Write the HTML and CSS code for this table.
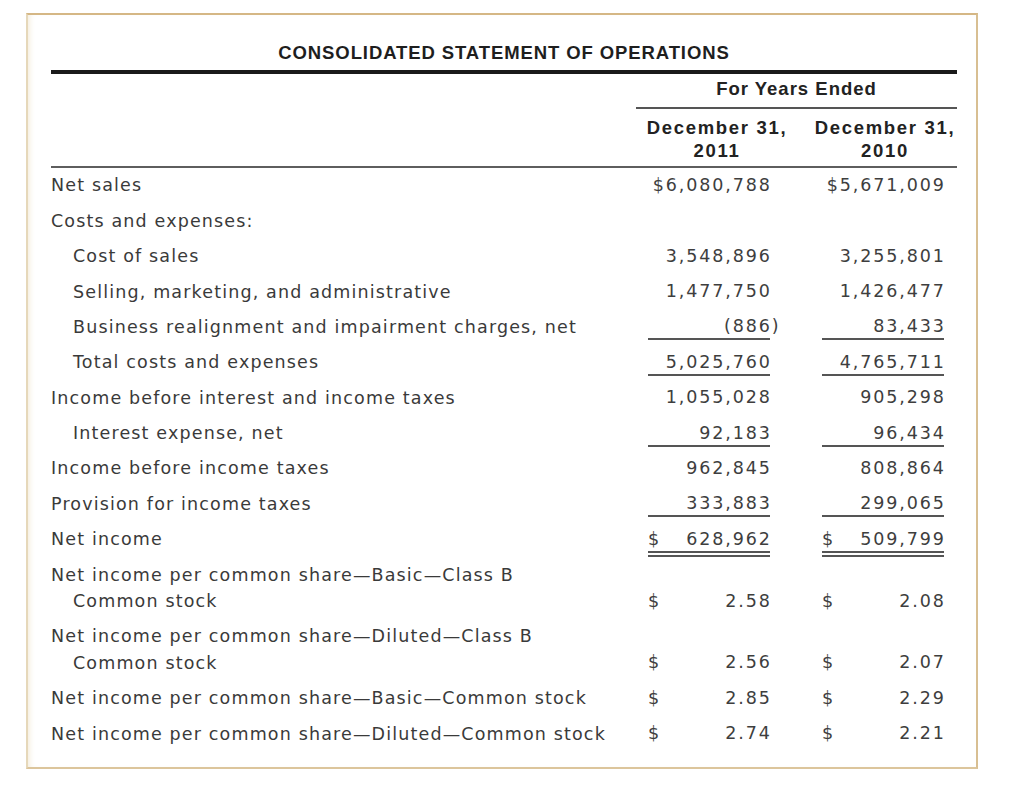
FILE: index.html
```html
<!DOCTYPE html>
<html lang="en">
<head>
<meta charset="utf-8">
<title>Consolidated Statement of Operations</title>
<link rel="stylesheet" href="styles.css">
</head>
<body>
<div class="sheet">
  <div class="title">CONSOLIDATED STATEMENT OF OPERATIONS</div>
  <div class="period">For Years Ended</div>
  <div class="dates">
    <div class="date c1">December 31,<br>2011</div>
    <div class="date c2">December 31,<br>2010</div>
  </div>
  <div class="rows">
    <div class="row"><div class="label">Net sales</div><div class="num"><span class="v">$6,080,788</span></div><div class="num"><span class="v">$5,671,009</span></div></div>
    <div class="row"><div class="label">Costs and expenses:</div><div class="num"></div><div class="num"></div></div>
    <div class="row"><div class="label indent">Cost of sales</div><div class="num"><span class="v">3,548,896</span></div><div class="num"><span class="v">3,255,801</span></div></div>
    <div class="row"><div class="label indent">Selling, marketing, and administrative</div><div class="num"><span class="v">1,477,750</span></div><div class="num"><span class="v">1,426,477</span></div></div>
    <div class="row"><div class="label indent">Business realignment and impairment charges, net</div><div class="num u"><span class="v neg">(886)</span></div><div class="num u"><span class="v">83,433</span></div></div>
    <div class="row"><div class="label indent">Total costs and expenses</div><div class="num u"><span class="v">5,025,760</span></div><div class="num u"><span class="v">4,765,711</span></div></div>
    <div class="row"><div class="label">Income before interest and income taxes</div><div class="num"><span class="v">1,055,028</span></div><div class="num"><span class="v">905,298</span></div></div>
    <div class="row"><div class="label indent">Interest expense, net</div><div class="num u"><span class="v">92,183</span></div><div class="num u"><span class="v">96,434</span></div></div>
    <div class="row"><div class="label">Income before income taxes</div><div class="num"><span class="v">962,845</span></div><div class="num"><span class="v">808,864</span></div></div>
    <div class="row"><div class="label">Provision for income taxes</div><div class="num u"><span class="v">333,883</span></div><div class="num u"><span class="v">299,065</span></div></div>
    <div class="row"><div class="label">Net income</div><div class="num uu split"><span class="d">$</span><span class="v">628,962</span></div><div class="num uu split"><span class="d">$</span><span class="v">509,799</span></div></div>
    <div class="row"><div class="label"><span class="line">Net income per common share—Basic—Class B</span><span class="line indent">Common stock</span></div><div class="num split"><span class="d">$</span><span class="v">2.58</span></div><div class="num split"><span class="d">$</span><span class="v">2.08</span></div></div>
    <div class="row"><div class="label"><span class="line">Net income per common share—Diluted—Class B</span><span class="line indent">Common stock</span></div><div class="num split"><span class="d">$</span><span class="v">2.56</span></div><div class="num split"><span class="d">$</span><span class="v">2.07</span></div></div>
    <div class="row"><div class="label">Net income per common share—Basic—Common stock</div><div class="num split"><span class="d">$</span><span class="v">2.85</span></div><div class="num split"><span class="d">$</span><span class="v">2.29</span></div></div>
    <div class="row"><div class="label">Net income per common share—Diluted—Common stock</div><div class="num split"><span class="d">$</span><span class="v">2.74</span></div><div class="num split"><span class="d">$</span><span class="v">2.21</span></div></div>
  </div>
</div>
</body>
</html>
```
FILE: styles.css
```css
* { box-sizing: border-box; }

body {
  margin: 0;
  background: #ffffff;
  font-family: "Liberation Sans", Arial, sans-serif;
  color: #3a3a3a;
}

.sheet {
  margin: 13px 0 0 26px;
  width: 952px;
  height: 756px;
  border: 2px solid;
  border-color: #d5b785 #d8bf92 #dcc59c #e6d8ba;
  box-shadow: inset 5px 0 6px -4px #f1e8d4;
  padding: 27px 19px 0 23px;
  background: #fff;
}

.title {
  text-align: center;
  font-weight: bold;
  font-size: 18.5px;
  line-height: 22px;
  letter-spacing: 0.9px;
  color: #1e1e1e;
  padding-bottom: 6px;
  border-bottom: 4px solid #1a1a1a;
}

.period {
  width: 321px;
  margin-left: auto;
  text-align: center;
  font-weight: bold;
  font-size: 18.5px;
  line-height: 22px;
  letter-spacing: 1px;
  color: #222;
  padding: 4px 0 7px;
  border-bottom: 2px solid #555;
}

.dates {
  display: flex;
  justify-content: flex-end;
  gap: 15px;
  padding: 6.5px 0 4.5px;
  border-bottom: 2px solid #5e5e5e;
}

.date {
  text-align: center;
  font-weight: bold;
  font-size: 18.5px;
  line-height: 23px;
  letter-spacing: 1.7px;
  color: #222;
}

.date.c1 { width: 162px; }
.date.c2 { width: 144px; }

.row {
  display: grid;
  grid-template-columns: minmax(0, 1fr) 122px 122px;
  column-gap: 52px;
  align-items: end;
  padding: 4.45px 13px 4.45px 0;
}

.label {
  font-family: "DejaVu Sans", Verdana, sans-serif;
  font-size: 17.5px;
  line-height: 26.5px;
  letter-spacing: 1.15px;
  white-space: nowrap;
  color: #3a3a3a;
}

.line { display: block; }

.indent { padding-left: 22px; }

.num {
  display: flex;
  justify-content: flex-end;
  font-family: "DejaVu Sans", Verdana, sans-serif;
  font-size: 17.5px;
  line-height: 24px;
  letter-spacing: 1.9px;
  color: #3e3e3e;
  border-bottom: 2px solid transparent;
}

.num .v { margin-right: -1.9px; }
.num .v.neg { margin-right: -10.6px; }

.num.split { justify-content: space-between; }

.num.u { border-bottom-color: #555; }

.num.uu {
  border-bottom: 6px double #555;
  margin-bottom: -4px;
}
```
